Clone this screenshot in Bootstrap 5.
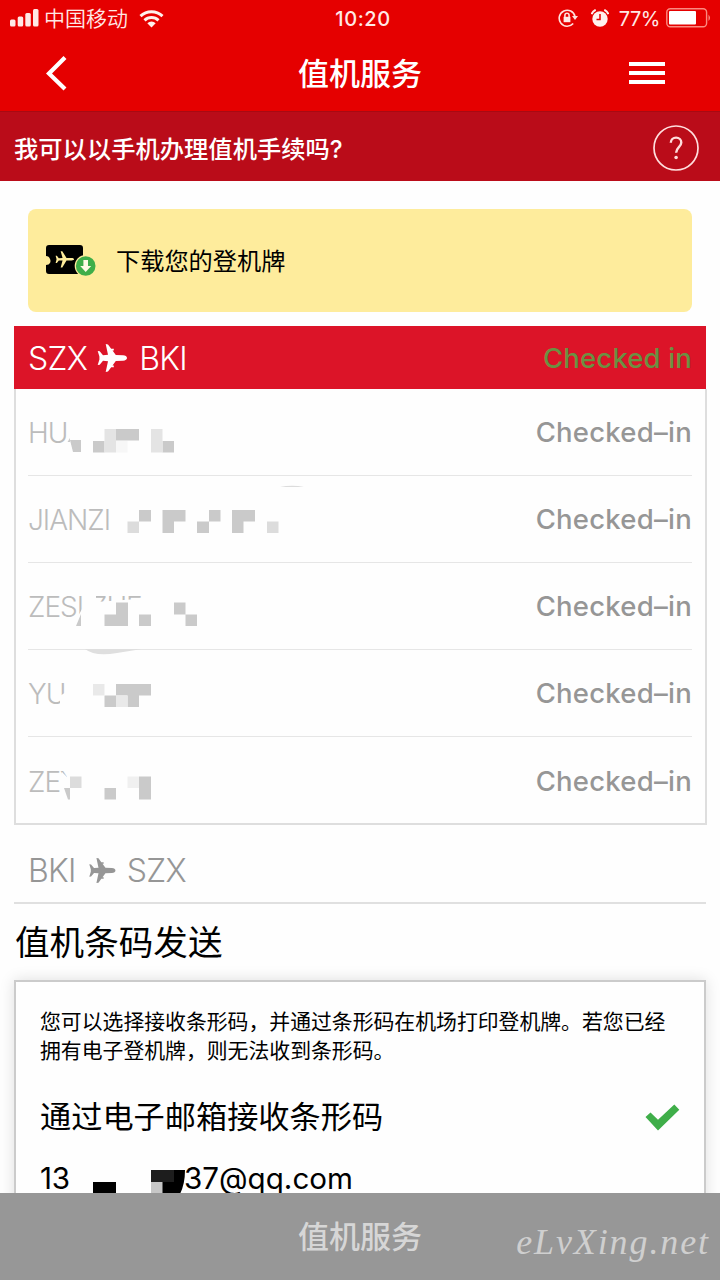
<!DOCTYPE html>
<html lang="zh-CN">
<head>
<meta charset="utf-8">
<meta name="viewport" content="width=device-width, initial-scale=1">
<title>值机服务</title>
<link href="https://cdn.jsdelivr.net/npm/bootstrap@5.3.0/dist/css/bootstrap.min.css" rel="stylesheet">
<style>
body{font-family:Inter,"Noto Sans CJK SC",sans-serif;color:#000;background:#fefefe;height:1280px;overflow:hidden;line-height:1}
svg{display:block;flex:none}
.app-head{background:#e50000;height:111px;color:#fff}
.status{height:36px;padding:0 9px 0 10px;color:#ffe9e6}
.status .carrier{font-size:21px;margin-left:5px;margin-right:11px;font-weight:350}
.status .clock{left:0;right:0;top:9px;font-size:20px;font-weight:500;letter-spacing:.6px;text-align:center;padding-left:6px}
.status .pct{font-size:20px;margin:0 6px 0 10px;letter-spacing:-.5px;padding-top:1px}
.titlebar{height:75px;padding:0 55px 0 45px}
.titlebar h1,.cta{font-size:31px;font-weight:500}
.titlebar svg{margin-top:-1px}
.help{background:#ba0c19;height:70px;padding:2px 21px 0 14px;border-top:1px solid #a80a12;color:#fff;font-size:24.3px;font-weight:500}
.help span{padding-top:4px}
.download{margin:28px 28px 0;height:103px;border-radius:8px;background:#feec9c;padding-left:18px;font-size:24.2px}
.download span{padding-top:4px;margin-left:20px}
.trip{margin:14px 13px 0 14px}
.trip-head{height:63px;margin-right:1px;background:#dc1428;color:#fff;padding:2px 14px 0;font-size:32px;font-weight:300}
.trip-head .state{color:#6a9142;font-size:27.5px;font-weight:500;letter-spacing:.15px}
.route{letter-spacing:-.7px}
.trip-head .route svg{margin:-2px 11px 0 10px}
.pax-list{border:2px solid #dedede;border-top:0;height:436px;padding:0 13px 0 12px}
.pax{height:87px;border-bottom:1px solid #e6e6e6;font-size:27.5px}
.pax span{padding-top:2px}
.pax:last-child{border:0}
.pax .who{color:#bcbcbc;font-weight:300;letter-spacing:-1px;font-size:28px}
.pax .state{color:#969696;font-weight:450;letter-spacing:.25px}
.pax svg{left:-14px;top:0}
.back-route{margin:0 14px;height:79px;border-bottom:2px solid #e0e0e0;padding:15px 14px 0;color:#969696;font-size:32px;font-weight:300}
.back-route svg{margin:-2px 11px 0 13px}
.section-title{font-size:34.6px;margin:20px 0 0 15px;line-height:36px;font-weight:400}
.send{margin:20px 14px 0;height:300px;border:2px solid #cbcbcb;box-shadow:0 0 14px rgba(0,0,0,.13);padding:25px 24px;background:#fefefe}
.send p{font-size:20.85px;line-height:29px;margin:0;white-space:nowrap}
.send h3{font-size:31.2px;margin:0;font-weight:400;line-height:36px}
.mail{font-size:29.6px;margin-top:28px;line-height:30px;height:30px}
.m-a{width:144px;letter-spacing:-.3px}
.mail svg{left:-26px;top:-13px}
.cta{background:#979797;height:87px;color:#d6d6d6}
.mark-site{right:10px;top:28px;font:italic 36px "Liberation Serif",cursive;letter-spacing:1.9px;color:#cfcfcf;white-space:nowrap}
</style>
</head>
<body>
<svg width="0" height="0" class="position-absolute"><defs>
<symbol id="plane" viewBox="0 0 30 28"><path d="M29.500 14c0-1.500-1.500-2.600-4-2.700L18.300 11 15 6.500h1.300V4.800H13.700L10.500.4 8.200 0l2.300 10.800-5 .4L2.200 7.200.2 7l1.700 5.500v3L.2 21l2-.2 3.300-4 5 .4L8.200 28l2.300-.4 3.200-4.400h2.600v-1.700H15l3.300-4.500 7.200-.3c2.500-.1 4-1.200 4-2.700z" fill="currentColor"/></symbol>
</defs></svg>

<header class="app-head">
  <div class="status d-flex align-items-center position-relative">
    <svg width="29" height="18" viewBox="0 0 29 18" fill="#ffe9e6"><rect x="0" y="10.500" width="5.500" height="7" rx="1.500"/><rect x="7.700" y="7.500" width="5.500" height="10" rx="1.500"/><rect x="15.300" y="4" width="5.500" height="13.500" rx="1.500"/><rect x="23" y="0" width="5.500" height="17.500" rx="1.500"/></svg>
    <span class="carrier">中国移动</span>
    <svg width="25" height="19" viewBox="0 0 25 19" fill="none" stroke="#fff1ee" stroke-width="3"><path d="M1.500 7.200a16 16 0 0 1 22 0M5.500 11.300a10.200 10.200 0 0 1 14 0"/><path d="M8.300 14.200a6.200 6.200 0 0 1 8.400 0l-4.200 4.300z" fill="#fff1ee" stroke="none"/></svg>
    <span class="clock position-absolute">10:20</span>
    <div class="d-flex align-items-center ms-auto">
      <svg width="20" height="20" viewBox="0 0 20 20" fill="none" stroke="#ffe0dc" stroke-width="1.600"><path d="M15.200 15.500A8 8 0 1 1 17 8.500"/><path d="M14 8h6l-3 4z" fill="#ffe0dc" stroke="none"/><rect x="5.600" y="8.800" width="6.800" height="5.400" fill="#ffe9e6" stroke="none"/><path d="M6.900 9V7.300a2.100 2.100 0 0 1 4.200 0V9"/></svg>
      <svg width="18" height="18" viewBox="0 0 18 18" style="margin-left:13px"><circle cx="9" cy="10" r="7.700" fill="#fff1ee"/><path d="M.6 5.200A8 8 0 0 1 4.700.8M17.400 5.200A8 8 0 0 0 13.300.8" stroke="#fff1ee" stroke-width="2" fill="none"/><path d="M9 5v5.500H5.500" stroke="#e50000" stroke-width="1.500" fill="none"/></svg>
      <span class="pct">77%</span>
      <svg width="45" height="20" viewBox="0 0 45 20"><rect x=".8" y=".8" width="39.800" height="18" rx="3.500" fill="none" stroke="#fb8a80" stroke-width="1.400"/><rect x="3" y="3" width="27" height="13.500" rx="1" fill="#fff"/><path d="M42.500 6.500q3 3.300 0 6.600z" fill="#fb8a80"/></svg>
    </div>
  </div>
  <div class="titlebar d-flex align-items-center justify-content-between position-relative">
    <svg width="22" height="36" viewBox="0 0 22 36" fill="none" stroke="#fff" stroke-width="4.200"><path d="M20 2.500 4 18.500l16 15.500"/></svg>
    <h1 class="m-0 position-absolute start-0 end-0 text-center">值机服务</h1>
    <svg width="36" height="22" viewBox="0 0 36 22" fill="#fff"><path d="M0 0h36v4H0zM0 9h36v4H0zM0 18h36v4H0z"/></svg>
  </div>
</header>

<div class="help d-flex align-items-center justify-content-between">
  <span>我可以以手机办理值机手续吗?</span>
  <svg width="46" height="46" viewBox="0 0 46 46" fill="none" stroke="#ffdedd"><circle cx="23" cy="23" r="22" stroke-width="1.700"/><path d="M17.800 17.800c0-3 2.300-5.200 5.300-5.200s5.200 2.100 5.200 4.900c0 4.500-5.200 4.800-5.200 10.300" stroke-width="2.400"/><circle cx="23.100" cy="32.500" r="1.800" fill="#ffdedd" stroke="none"/></svg>
</div>

<main>
  <div class="download d-flex align-items-center">
    <svg width="50" height="34" viewBox="0 0 50 34"><path d="M3 1h31q3 0 3 3v23q0 3-3 3H3q-3 0-3-3v-6q3 0 4-2t0-4q-1-3-4-3V4q0-3 3-3z"/><g transform="translate(9.500 6.500) scale(.63)" fill="#feec9c" stroke="none"><path d="M29.500 14c0-1-1.500-1.800-4-1.900L17.500 12 10.800 1H8.200l3 11-6 .3L2.200 8.200H.2l1.500 5.800L.2 19.800h2l3-4.100 6 .3-3 11h2.600l6.700-11 8-.1c2.500-.1 4-.9 4-1.900z"/></g><circle cx="39.700" cy="22" r="11" fill="#feec9c"/><circle cx="39.700" cy="22" r="9.800" fill="#3fae49"/><path d="M37.400 16h4.600v6h3.200l-5.500 6-5.500-6h3.200z" fill="#fffbe5"/></svg>
    <span>下载您的登机牌</span>
  </div>

  <section class="trip">
    <div class="trip-head d-flex align-items-center justify-content-between">
      <div class="route d-flex align-items-center"><span>SZX</span><svg width="31" height="28"><use href="#plane"/></svg><span>BKI</span></div>
      <span class="state">Checked in</span>
    </div>
    <div class="pax-list">
      <div class="pax d-flex align-items-center justify-content-between position-relative"><span class="who">HU</span><span class="state">Checked–in</span>
        <svg class="position-absolute" width="300" height="87" viewBox="14 389 300 87" fill="#cacaca"><path d="M70 440h11v12h-8zM93 441h11.500v11.500H93zM116 429h23v11.500H116zM162.500 441H174v11.500h-11.500zM67.500 442l2.500-4v4z"/><path fill="#e4e4e4" d="M104.500 429H116v23.500h-11.500zM151 429h11.500v23.500H151z"/><path fill="#f7f7f7" d="M116 441h11.500v11.500H116z"/></svg></div>
      <div class="pax d-flex align-items-center justify-content-between position-relative"><span class="who">JIANZI</span><span class="state">Checked–in</span>
        <svg class="position-absolute" width="300" height="87" viewBox="14 476 300 87" fill="#cacaca"><path d="M139 510h12v11.500h-12zM162.500 510h23v11.500h-11.500V533h-11.500zM209 510h11.500v11.500H209zM197 521.500h12V533h-12zM232 510h23v11.500h-11.500V533H232z"/><path fill="#dcdcdc" d="M127.500 521.500H139V533h-11.500zM267 521.500h11.500V533H267zM280 487q12-2.500 24 0z"/></svg></div>
      <div class="pax d-flex align-items-center justify-content-between position-relative"><span class="who">ZESI ZHE</span><span class="state">Checked–in</span>
        <svg class="position-absolute" width="300" height="94" viewBox="14 563 300 94" fill="#cacaca"><path fill="#fefefe" d="M87 590h9v30h-9zM96 602l14-1 41-3v22H96zM76 620l6-11 5 0v11z"/><path d="M116 602.500h12V626h-23.500v-11.500H116zM139 614.500h12V626h-12zM174 602.500h11.500v12H174zM185.500 614.500H197V626h-11.500zM81 614v12h-5z"/><path fill="#dfdfdf" d="M85 649h57l-25 4q-22 4-32-4z"/></svg></div>
      <div class="pax d-flex align-items-center justify-content-between position-relative"><span class="who">YU</span><span class="state">Checked–in</span>
        <svg class="position-absolute" width="300" height="87" viewBox="14 650 300 87" fill="#cacaca"><path fill="#fefefe" d="M60 696l6-4v14h-6z"/><path d="M116 684h35v11.500h-12V707h-11.500v-11.500H116V707h-11.500v-11.500H116z"/><path fill="#e9e9e9" d="M93 684h11.500v11.500H93zM116 695.500h11.500V707H116z"/></svg></div>
      <div class="pax d-flex align-items-center justify-content-between position-relative"><span class="who">ZEY</span><span class="state">Checked–in</span>
        <svg class="position-absolute" width="300" height="87" viewBox="14 737 300 87" fill="#cacaca"><path fill="#fefefe" d="M62 772l5 5v-8h2v-6h15v30H62z"/><path d="M104.500 788H116v11.500h-11.500zM139 776.500h12v23h-12zM64 788h6v11.500h-2z"/><path fill="#dcdcdc" d="M70 776.500h11.500V788H70z"/><path fill="#f0f0f0" d="M127.500 776.500H139V788h-11.500z"/></svg></div>
    </div>
  </section>

  <div class="back-route d-flex align-items-center route"><span>BKI</span><svg width="27" height="25"><use href="#plane"/></svg><span>SZX</span></div>

  <h2 class="section-title">值机条码发送</h2>
  <section class="send">
    <p>您可以选择接收条形码，并通过条形码在机场打印登机牌。若您已经<br>拥有电子登机牌，则无法收到条形码。</p>
    <div class="d-flex align-items-center justify-content-between" style="margin-top:34px">
      <h3>通过电子邮箱接收条形码</h3>
      <svg width="35" height="27" viewBox="0 0 35 27"><path d="M.5 13 5.500 8.500l7.500 7.300L29.300.5l5 5.200L13 26.500z" fill="#3fae49"/></svg>
    </div>
    <div class="mail d-flex position-relative"><span class="m-a">13</span><span class="m-b">37@qq.com</span>
      <svg class="position-absolute" width="220" height="60" viewBox="14 1150 220 60"><path d="M93 1182h23v12H93zM151 1170h34q0 14-5 24h-18v-12h-11z"/><path d="M151 1170h23v12h-23z" fill="#1d1d1d"/><path d="M151 1182h11.500v12H151z" fill="#c6c6c6"/></svg></div>
  </section>
</main>

<footer class="cta fixed-bottom d-flex align-items-center justify-content-center">
  <span>值机服务</span>
  <span class="mark-site position-absolute">eLvXing.net</span>
</footer>
<script src="https://cdn.jsdelivr.net/npm/bootstrap@5.3.0/dist/js/bootstrap.bundle.min.js"></script>
</body>
</html>
